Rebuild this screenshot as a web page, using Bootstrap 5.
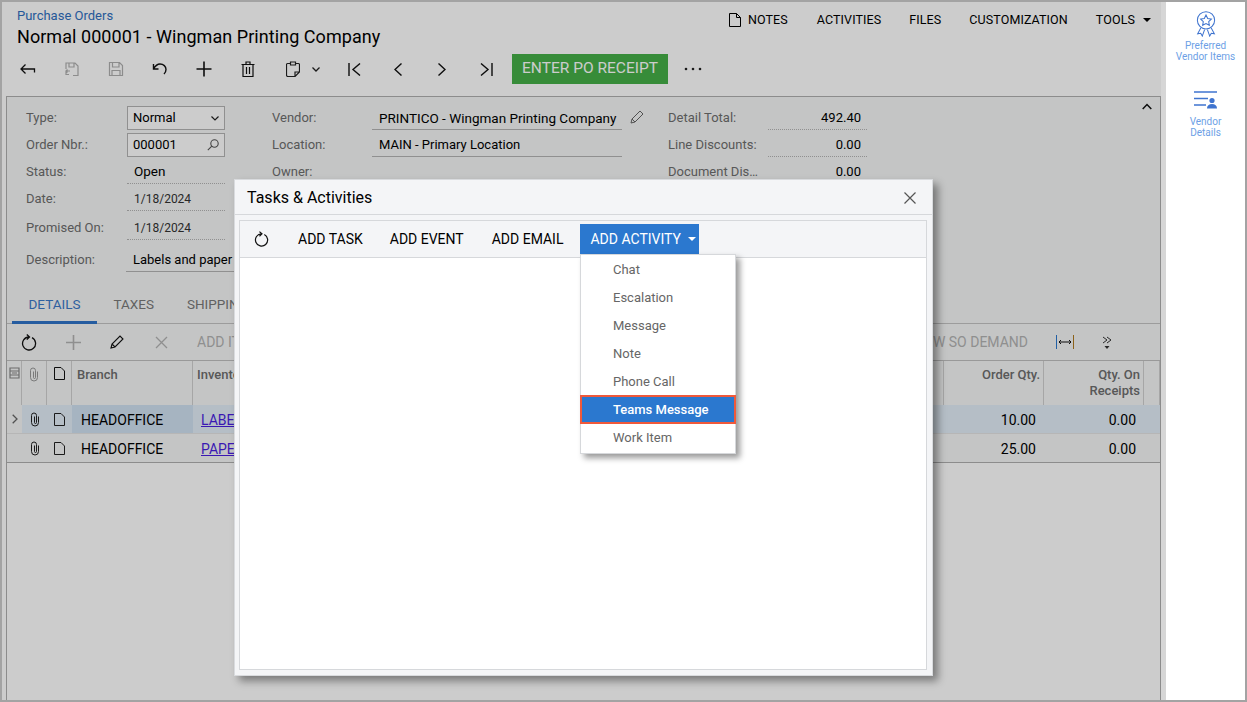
<!DOCTYPE html>
<html lang="en">
<head>
<meta charset="utf-8">
<title>Purchase Orders</title>
<link href="https://cdn.jsdelivr.net/npm/bootstrap@5.3.0/dist/css/bootstrap.min.css" rel="stylesheet">
<style>
html,body{height:100%;margin:0;overflow:hidden}
body{font-family:Roboto,"Liberation Sans",sans-serif;font-size:14px;color:#000;background:#fff;line-height:20px}
.shell{width:1247px;height:702px;border:2px solid #a3a3a3;display:flex;background:#fff}
.main-area{position:relative;width:1159px;height:698px;flex:none;background:#fff;display:flex;flex-direction:column;overflow:hidden}
.dim-layer{position:absolute;inset:0;background:rgba(0,0,0,.2)}
.side-rail{flex:1;border-left:5px solid #d6d6d6;background:#fff;display:flex;flex-direction:column;align-items:center;padding-top:9px}
.rail-item{display:flex;flex-direction:column;align-items:center;text-align:center;color:#6d9fe6;font-size:10px;line-height:11px;width:78px}
.rail-item svg{display:block}
.rail-gap{margin-top:29px}
.rail-t1{margin-top:3px}
.rail-t2{margin-top:7px}
.top-head{display:flex;justify-content:space-between;height:46px;padding-left:15px}
.crumb{color:#2f6fbf;font-size:13px;line-height:16px;margin-top:6px}
.page-title{font-size:18px;line-height:24px;font-weight:400;margin:1px 0 0;letter-spacing:.05px}
.top-links{display:flex;align-items:center;height:20px;margin-top:8px;font-size:12.5px;padding-right:10px}
.top-links a{color:#000;text-decoration:none;margin-left:28px;display:flex;align-items:center;letter-spacing:.1px}
.top-links a.link-after-notes{margin-left:29px}
.notes-ico{margin-right:6px}
.caret-d{display:inline-block;width:0;height:0;border-left:4px solid transparent;border-right:4px solid transparent;border-top:4px solid currentColor;margin-left:8px}
.main-bar{display:flex;align-items:center;height:30px;margin-top:6px;padding-left:4px}
.ibtn{width:44px;height:30px;display:flex;align-items:center;justify-content:center;flex:none}
.ibtn-wide{width:62px;justify-content:flex-start;padding-left:16px}
.clip-gap{margin-right:12px}
.go-btn{background:#45b048;color:#fff;border:0;border-radius:0;height:30px;width:156px;font-size:15.5px;padding:0;margin-left:4px}
.go-btn:hover{background:#45b048;color:#fff}
.more-dots{margin-left:16px;display:flex}
.work-panel{margin:12px 0 0 4px;width:1155px;flex:1;border:1px solid #b0b0b0;border-bottom:0;display:flex;flex-direction:column}
.form-zone{background:#f5f7f7;flex:none}
.form-cols{display:flex;padding:9px 0 0 19px;height:176px;position:relative}
.fcol{display:flex;flex-direction:column}
.fcol-a{width:246px}
.fcol-b{width:396px}
.fcol-c{width:200px}
.frow{display:flex;height:24px;margin-bottom:3px;flex:none;font-size:13px}
.frow-gap{margin-top:2px}
.frow-gap2{margin-top:5px}
.flabel{color:#6e6e6e;width:100px;flex:none;line-height:23px;white-space:nowrap}
.fbox{width:98px;border:1px solid #b4b4b4;background:#fff;padding:0 5px;display:flex;align-items:center;justify-content:space-between;margin-left:1px}
.fdot{width:98px;border-bottom:1px dotted #b4b4b4;padding:0 7px;margin-left:1px;line-height:24px;color:#333}
.fdot-open{font-size:13.5px;color:#000;line-height:23px}
.fdot-date{font-size:12px}
.fline{border-bottom:1px solid #b4b4b4;padding:0 7px;line-height:24px;width:250px;white-space:nowrap;overflow:hidden}
.fline-big{font-size:13.5px}
.fsum{width:99px;border-bottom:1px dotted #b4b4b4;text-align:right;padding-right:6px;line-height:24px}
.fdesc{width:240px}
.collapse-ico{position:absolute;right:8px;top:6px}
.tab-strip{height:51px;display:flex;align-items:flex-end;background:#f5f7f7;border-bottom:1px solid #c4c4c4;padding-left:5px;margin:0;flex:none}
.tab-strip .nav-link{color:#7a7a7a;padding:0 16.5px;line-height:20px;height:30px;background:none;border:0;border-radius:0;margin-bottom:-1px;font-size:13.5px}
.tab-strip .nav-link.active{color:#3a78c8;border-bottom:3px solid #2f74c8}
.grid-bar{height:37px;display:flex;align-items:center;background:#f5f7f7;border-bottom:1px solid #c0c0c0;flex:none;padding-left:0}
.gbtn{width:44px;display:flex;justify-content:center;flex:none}
.gbar-text{color:#b3b3b3;font-size:14px;margin-left:14px}
.gbar-right{margin-left:auto;display:flex;align-items:center;padding-right:48px}
.gbar-right .gbar-text{margin-right:28px}
.gbar-fit{margin-right:28px;display:flex}
.grid-head,.grid-row{display:flex;flex:none}
.grid-head{height:44px;background:#f5f7f7;color:#6e6e6e;font-weight:500;font-size:13px;line-height:16px}
.grid-row{height:29px;background:#f5f7f7;line-height:31px;border-bottom:1px solid #e4e4e4}
.grid-row.row-last{border-bottom:1px solid #b0b0b0}
.grid-row.row-sel .tcell{background:#e3eef8}
.grid-row.row-sel .tcell.cell-focus{background:#d0e2f2}
.grid-row.row-sel .tcell.cell-mark{background:#f5f7f7}
.tcell{flex:none;overflow:hidden;white-space:nowrap;display:flex;justify-content:center}
.grid-head .tcell{border-right:1px solid #d0d0d0;padding-top:6px}
.w-mark{width:15px}.w-clip{width:25px}.w-note{width:25px}.w-branch{width:121px}.w-inv{width:751px}.w-qty{width:100px}.w-tail{flex:1}
.t-left{justify-content:flex-start}.t-right{justify-content:flex-end}
.grid-head .t-left{padding-left:5px}
.grid-head .w-inv.t-left{padding-left:4px}
.grid-head .t-right{padding-right:3px;text-align:right}
.grid-row .t-left{padding-left:9px}
.grid-row .w-inv.t-left{padding-left:8px}
.grid-row .t-right{padding-right:8px}
.grid-row a{color:#4a1fe0}
.rest-zone{flex:1}
.tasks-dialog{position:absolute;left:232px;top:177px;width:699px;height:497px;background:#f4f5f7;border:1px solid #d9dbde;border-radius:0;box-shadow:5px 5px 8px rgba(0,0,0,.4);display:flex;flex-direction:column;font-size:14px}
.tasks-dialog .modal-header{height:35px;padding:1px 16px 0 12px;border-bottom:1px solid #d6d8db;border-radius:0;flex:none}
.tasks-dialog .modal-title{font-size:16px;line-height:20px;font-weight:400}
.x-close{border:0;background:none;padding:0;display:flex}
.tasks-body{margin:5px 5px 5px 4px;flex:1;border:1px solid #d6d8db;background:#fff;display:flex;flex-direction:column;position:relative;padding:0}
.tasks-bar{height:37px;background:#f4f5f7;border-bottom:1px solid #d6d8db;display:flex;align-items:center;flex:none;padding-left:14px}
.tbtn{border:0;border-radius:0;background:none;color:#000;padding:0;font-size:14px;height:30px;line-height:30px}
.tbtn:hover{color:#000}
.tbtn-1{margin-left:29px}.tbtn-2{margin-left:27px}.tbtn-3{margin-left:28px}
.tbtn-act{background:#2b78cf;color:#fff;width:119px;margin-left:17px;display:flex;align-items:center;justify-content:flex-start;padding-left:10px}
.tbtn-act:hover,.tbtn-act:active{background:#2b78cf!important;color:#fff!important}
.tbtn-act .caret-d{margin-left:7px}
.act-menu{position:absolute;left:340px;top:33px;width:156px;border:1px solid #d6d8db;border-radius:0;padding:0 0 2px;margin:0;background:#fff;box-shadow:4px 4px 6px rgba(0,0,0,.4);min-width:0;font-size:13px}
.act-menu .dropdown-item{height:28px;line-height:30px;padding:0 0 0 32px;color:#666}
.act-menu .dropdown-item:hover{background:none}
.act-menu .dropdown-item.item-on,.act-menu .dropdown-item.item-on:hover{background:#2b78cf;color:#fff;font-weight:500;outline:2px solid #f0593a;outline-offset:-1px;height:27px;margin-top:1px;line-height:28px}
</style>
</head>
<body>
<div class="shell">
  <div class="main-area">
    <div class="top-head">
      <div>
        <div class="crumb">Purchase Orders</div>
        <h1 class="page-title">Normal 000001 - Wingman Printing Company</h1>
      </div>
      <div class="top-links">
        <a href="#" class="m-0"><svg width="14" height="14" viewBox="0 0 14 14" fill="none" stroke="#000" class="notes-ico"><path d="M1.5.5h7l4 4v9h-11zM8.5.5v4h4"/></svg>NOTES</a>
        <a href="#" class="link-after-notes">ACTIVITIES</a><a href="#">FILES</a><a href="#">CUSTOMIZATION</a><a href="#">TOOLS<span class="caret-d"></span></a>
      </div>
    </div>
    <div class="main-bar">
      <div class="ibtn"><svg width="16" height="12" viewBox="0 0 16 12" fill="none" stroke="#111" stroke-width="1.3"><path d="M5.5 1.5 1 6l4.500 4.500M1 6h13.500v3.500"/></svg></div>
      <div class="ibtn"><svg width="16" height="16" viewBox="0 0 16 16" fill="none" stroke="#b0b0b0" stroke-width="1.2"><path d="M2 8V2h9l3 3v9.500H9M5 2v4h5V2M6 10H2m1.500-1.500L2 10l1.500 1.500M2 10v3.500h3"/></svg></div>
      <div class="ibtn"><svg width="16" height="16" viewBox="0 0 16 16" fill="none" stroke="#b0b0b0" stroke-width="1.2"><path d="M1.500 1.500h10l3 3v10h-13zM4.500 1.500v4.500h6.500V1.500M4 14.500V9.500h8v5"/></svg></div>
      <div class="ibtn"><svg width="16" height="14" viewBox="0 0 16 14" fill="none" stroke="#111" stroke-width="1.400"><path d="M1.500 2v5h5M1.500 7C3.500 3.500 5.500 2 8 2c3.500 0 6 2.500 6 5.500 0 2-1 3.500-2 4.500"/></svg></div>
      <div class="ibtn"><svg width="16" height="16" viewBox="0 0 16 16" fill="none" stroke="#111" stroke-width="1.600"><path d="M8 .5v15M.5 8h15"/></svg></div>
      <div class="ibtn"><svg width="14" height="16" viewBox="0 0 14 16" fill="none" stroke="#111" stroke-width="1.200"><path d="M.5 3.500h13M5 3.500V1h4v2.500M2 3.500v12h10v-12M5.500 6v7M8.500 6v7"/></svg></div>
      <div class="ibtn ibtn-wide"><svg width="14" height="16" viewBox="0 0 14 16" fill="none" stroke="#222" stroke-width="1.200" class="clip-gap"><path d="M4 2.500H1.500c-.5 0-1 .5-1 1V14c0 .8.500 1.500 1.500 1.500h7l4.500-4.500V3.500c0-.5-.5-1-1-1H10M4.500 1h5v3h-5zM9 15.500V11h4.500"/></svg><svg width="8" height="5" viewBox="0 0 8 5" fill="none" stroke="#222" stroke-width="1.300"><path d="M.5.500 4 4 7.500.500"/></svg></div>
      <div class="ibtn ms-n1"><svg width="13" height="13" viewBox="0 0 13 13" fill="none" stroke="#111" stroke-width="1.400"><path d="M1 0v13M12 .5 5 6.500l7 6"/></svg></div>
      <div class="ibtn"><svg width="8" height="13" viewBox="0 0 8 13" fill="none" stroke="#111" stroke-width="1.400"><path d="M7.500.5 1 6.500l6.500 6"/></svg></div>
      <div class="ibtn"><svg width="8" height="13" viewBox="0 0 8 13" fill="none" stroke="#111" stroke-width="1.400"><path d="M.5.5 7 6.500l-6.500 6"/></svg></div>
      <div class="ibtn"><svg width="13" height="13" viewBox="0 0 13 13" fill="none" stroke="#111" stroke-width="1.400"><path d="M12 0v13M1 .5l7 6-7 6"/></svg></div>
      <button class="btn go-btn">ENTER PO RECEIPT</button>
      <div class="more-dots"><svg width="18" height="4" viewBox="0 0 18 4" fill="#222"><circle cx="2" cy="2" r="1.300"/><circle cx="9" cy="2" r="1.300"/><circle cx="16" cy="2" r="1.300"/></svg></div>
    </div>
    <div class="work-panel">
      <div class="form-zone">
        <div class="form-cols">
          <div class="fcol fcol-a">
            <div class="frow"><div class="flabel">Type:</div><div class="fbox">Normal<svg width="8" height="5" viewBox="0 0 8 5" fill="none" stroke="#222" stroke-width="1.200"><path d="M.5.500 4 4 7.500.500"/></svg></div></div>
            <div class="frow"><div class="flabel">Order Nbr.:</div><div class="fbox">000001<svg width="12" height="12" viewBox="0 0 12 12" fill="none" stroke="#555" stroke-width="1.100"><circle cx="7.500" cy="4.500" r="3.700"/><path d="M4.800 7.200.8 11.200"/></svg></div></div>
            <div class="frow"><div class="flabel">Status:</div><div class="fdot fdot-open">Open</div></div>
            <div class="frow"><div class="flabel">Date:</div><div class="fdot fdot-date">1/18/2024</div></div>
            <div class="frow frow-gap"><div class="flabel">Promised On:</div><div class="fdot fdot-date">1/18/2024</div></div>
            <div class="frow frow-gap2"><div class="flabel">Description:</div><div class="fline fdesc text-black">Labels and paper</div></div>
          </div>
          <div class="fcol fcol-b">
            <div class="frow"><div class="flabel">Vendor:</div><div class="fline fline-big">PRINTICO - Wingman Printing Company</div><svg class="ms-2 mt-1" width="14" height="14" viewBox="0 0 14 14" fill="none" stroke="#666"><path d="M1 13l1-4L10 1l3 3-8 8zM2 9l3 3"/></svg></div>
            <div class="frow"><div class="flabel">Location:</div><div class="fline">MAIN - Primary Location</div></div>
            <div class="frow"><div class="flabel">Owner:</div></div>
          </div>
          <div class="fcol fcol-c">
            <div class="frow"><div class="flabel">Detail Total:</div><div class="fsum">492.40</div></div>
            <div class="frow"><div class="flabel">Line Discounts:</div><div class="fsum">0.00</div></div>
            <div class="frow"><div class="flabel">Document Dis…</div><div class="fsum">0.00</div></div>
          </div>
          <svg class="collapse-ico" width="10" height="7" viewBox="0 0 10 7" fill="none" stroke="#111" stroke-width="1.500"><path d="M.7 6 5 1.500 9.300 6"/></svg>
        </div>
        <ul class="nav tab-strip">
          <li class="nav-item"><a class="nav-link active" href="#">DETAILS</a></li>
          <li class="nav-item"><a class="nav-link" href="#">TAXES</a></li>
          <li class="nav-item"><a class="nav-link" href="#">SHIPPING</a></li>
        </ul>
        <div class="grid-bar">
          <div class="gbtn"><svg width="16" height="17" viewBox="0 0 16 17" fill="none" stroke="#111" stroke-width="1.300"><path d="M11 3.700A6.500 6.500 0 1 1 8 3M5.800 .6 8.500 3 5.800 5.600"/></svg></div>
          <div class="gbtn"><svg width="15" height="15" viewBox="0 0 15 15" fill="none" stroke="#b3b3b3" stroke-width="1.600"><path d="M7.500 0v15M0 7.500h15"/></svg></div>
          <div class="gbtn"><svg width="14" height="14" viewBox="0 0 14 14" fill="none" stroke="#111" stroke-width="1.100"><path d="M1 13l1-4L10 1l3 3-8 8zM2 9l3 3"/></svg></div>
          <div class="gbtn"><svg width="13" height="13" viewBox="0 0 13 13" fill="none" stroke="#b3b3b3" stroke-width="1.300"><path d="M1 1l11 11M12 1 1 12"/></svg></div>
          <div class="gbar-text">ADD ITEMS</div>
          <div class="gbar-right">
            <div class="gbar-text">VIEW SO DEMAND</div>
            <div class="gbar-fit"><svg width="18" height="14" viewBox="0 0 18 14" fill="none" stroke="#111"><path d="M.5 0v14" stroke="#2b78cf"/><path d="M17.500 0v14" stroke="#b07a20"/><path d="M3 7h12M5 5 3 7l2 2M13 5l2 2-2 2"/></svg></div>
            <svg width="10" height="13" viewBox="0 0 10 13" fill="none" stroke="#333"><path d="M1 1l4 3-4 3M5 1l4 3-4 3"/><path d="M2.500 10h5L5 13z" fill="#333" stroke="none"/></svg>
          </div>
        </div>
        <div class="grid-head">
          <div class="tcell w-mark"><svg width="11" height="12" viewBox="0 0 11 12" fill="none" stroke="#888" stroke-width="1.200"><path d="M1 1h9v10H1zM1 4h9M1 8h9M3 6h5"/></svg></div>
          <div class="tcell w-clip"><svg width="10" height="15" viewBox="0 0 10 15" fill="none" stroke="#999"><path d="M8.500 4.500v6a3.500 3.500 0 0 1-7 0V3.500a2.500 2.500 0 0 1 5 0v7a1 1 0 0 1-2 0V4.500"/></svg></div>
          <div class="tcell w-note"><svg width="11" height="13" viewBox="0 0 11 13" fill="none" stroke="#111"><path d="M.5.500h6.500l3.500 3.500v8.500H.5z"/></svg></div>
          <div class="tcell w-branch t-left">Branch</div>
          <div class="tcell w-inv t-left">Inventory ID</div>
          <div class="tcell w-qty t-right">Order Qty.</div>
          <div class="tcell w-qty t-right">Qty. On<br>Receipts</div>
          <div class="tcell w-tail"></div>
        </div>
        <div class="grid-row row-sel">
          <div class="tcell w-mark cell-mark align-items-center"><svg width="6" height="10" viewBox="0 0 6 10" fill="none" stroke="#666" stroke-width="1.300"><path d="M.7.700 5 5 .7 9.300"/></svg></div>
          <div class="tcell w-clip align-items-center"><svg width="10" height="15" viewBox="0 0 10 15" fill="none" stroke="#222"><path d="M8.500 4.500v6a3.500 3.500 0 0 1-7 0V3.500a2.500 2.500 0 0 1 5 0v7a1 1 0 0 1-2 0V4.500"/></svg></div>
          <div class="tcell w-note align-items-center"><svg width="11" height="13" viewBox="0 0 11 13" fill="none" stroke="#222"><path d="M.5.500h6.500l3.500 3.500v8.500H.5z"/></svg></div>
          <div class="tcell w-branch t-left cell-focus">HEADOFFICE</div>
          <div class="tcell w-inv t-left"><a href="#">LABELS</a></div>
          <div class="tcell w-qty t-right">10.00</div>
          <div class="tcell w-qty t-right">0.00</div>
          <div class="tcell w-tail"></div>
        </div>
        <div class="grid-row row-last">
          <div class="tcell w-mark"></div>
          <div class="tcell w-clip align-items-center"><svg width="10" height="15" viewBox="0 0 10 15" fill="none" stroke="#222"><path d="M8.500 4.500v6a3.500 3.500 0 0 1-7 0V3.500a2.500 2.500 0 0 1 5 0v7a1 1 0 0 1-2 0V4.500"/></svg></div>
          <div class="tcell w-note align-items-center"><svg width="11" height="13" viewBox="0 0 11 13" fill="none" stroke="#222"><path d="M.5.500h6.500l3.500 3.500v8.500H.5z"/></svg></div>
          <div class="tcell w-branch t-left">HEADOFFICE</div>
          <div class="tcell w-inv t-left"><a href="#">PAPER</a></div>
          <div class="tcell w-qty t-right">25.00</div>
          <div class="tcell w-qty t-right">0.00</div>
          <div class="tcell w-tail"></div>
        </div>
      </div>
      <div class="rest-zone"></div>
    </div>
    <div class="dim-layer"></div>
    <div class="modal-content tasks-dialog">
      <div class="modal-header">
        <h5 class="modal-title">Tasks &amp; Activities</h5>
        <button class="x-close ms-auto" aria-label="Close"><svg width="12" height="12" viewBox="0 0 12 12" fill="none" stroke="#555" stroke-width="1.200"><path d="M.5.500l11 11M11.500.500l-11 11"/></svg></button>
      </div>
      <div class="modal-body tasks-body">
        <div class="tasks-bar">
          <svg width="15" height="16" viewBox="0 0 16 17" fill="none" stroke="#111" stroke-width="1.300"><path d="M11 3.700A6.500 6.500 0 1 1 8 3M5.800 .6 8.500 3 5.800 5.600"/></svg>
          <button class="btn tbtn tbtn-1">ADD TASK</button>
          <button class="btn tbtn tbtn-2">ADD EVENT</button>
          <button class="btn tbtn tbtn-3">ADD EMAIL</button>
          <button class="btn tbtn tbtn-act">ADD ACTIVITY<span class="caret-d"></span></button>
        </div>
        <ul class="dropdown-menu show act-menu">
          <li><a class="dropdown-item" href="#">Chat</a></li>
          <li><a class="dropdown-item" href="#">Escalation</a></li>
          <li><a class="dropdown-item" href="#">Message</a></li>
          <li><a class="dropdown-item" href="#">Note</a></li>
          <li><a class="dropdown-item" href="#">Phone Call</a></li>
          <li><a class="dropdown-item item-on" href="#">Teams Message</a></li>
          <li><a class="dropdown-item" href="#">Work Item</a></li>
        </ul>
      </div>
    </div>
  </div>
  <aside class="side-rail">
    <div class="rail-item">
      <svg width="22" height="26" viewBox="0 0 22 28" fill="none" stroke="#3f74cf" stroke-width="1.100"><circle cx="11" cy="10" r="9.300"/><path d="M11 4.300l1.800 3.700 4 .6-2.900 2.800.7 4L11 13.600 7.400 15.400l.7-4L5.200 8.600l4-.6z"/><path d="M5.500 18 2 24.500l3.300-.5 1.700 3 2.500-7M16.500 18 20 24.500l-3.300-.5-1.700 3-2.500-7"/></svg>
      <div class="rail-t1">Preferred<br>Vendor Items</div>
    </div>
    <div class="rail-item rail-gap">
      <svg width="24" height="18" viewBox="0 0 24 18" fill="none" stroke="#3f74cf" stroke-width="1.300"><path d="M0 1h23M0 7.500h14M0 14h12"/><circle cx="18" cy="9.500" r="2.600" fill="#3f74cf" stroke="none"/><path d="M13 17.500c0-3 2-4.500 5-4.500s5 1.500 5 4.500z" fill="#3f74cf" stroke="none"/></svg>
      <div class="rail-t2">Vendor<br>Details</div>
    </div>
  </aside>
</div>
<script src="https://cdn.jsdelivr.net/npm/bootstrap@5.3.0/dist/js/bootstrap.bundle.min.js"></script>
</body>
</html>
